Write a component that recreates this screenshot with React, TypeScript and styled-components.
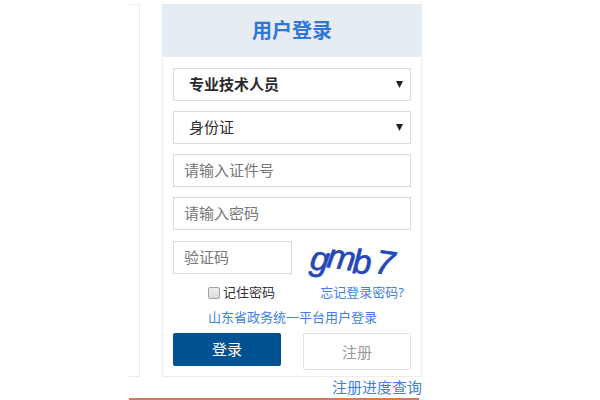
import React from "react";
import styled, { createGlobalStyle } from "styled-components";

const GlobalStyle = createGlobalStyle`
  * { box-sizing: border-box; }
  body {
    margin: 0;
    background: #fff;
    color: #333;
    font-family: "Noto Sans", "Noto Sans CJK SC", sans-serif;
    font-size: 15px;
  }
  button, input, select { font: inherit; margin: 0; }
`;

const Page = styled.main`
  padding: 4px 178px 0 129px;
`;

const Columns = styled.div`
  display: grid;
  grid-template-columns: 11px minmax(0, 1fr);
  column-gap: 22px;
`;

const SidePanel = styled.aside`
  border: 1px solid #ececec;
  border-left: 0;
`;

const Panel = styled.section`
  border: 1px solid #ececec;
`;

const PanelHeader = styled.header`
  margin: -1px -1px 0;
  background: #e5ecf2;
  text-align: center;
`;

const Title = styled.h1`
  margin: 0;
  color: #3075d8;
  font-size: 20px;
  font-weight: 700;
  line-height: 53px;
`;

const Form = styled.form`
  display: flex;
  flex-direction: column;
  padding: 11px 10px 6px;
`;

const Fields = styled.div`
  display: grid;
  gap: 10px;
`;

const SelectBox = styled.div`
  display: grid;
  align-items: center;
`;

const Select = styled.select<{ $strong?: boolean }>`
  grid-area: 1 / 1;
  width: 100%;
  height: 33px;
  padding: 0 24px 2px 15px;
  border: 1px solid #dcdcdc;
  border-radius: 0;
  background: #fff;
  color: #2b2b2b;
  font-weight: ${(p) => (p.$strong ? 700 : 400)};
  appearance: none;
`;

const Arrow = styled.svg`
  grid-area: 1 / 1;
  justify-self: end;
  width: 7px;
  height: 7px;
  margin-right: 8px;
  pointer-events: none;
`;

const Input = styled.input`
  width: 100%;
  min-width: 0;
  height: 33px;
  padding: 0 10px 2px;
  border: 1px solid #dcdcdc;
  border-radius: 0;
  background: #fff;
  color: #333;
  &::placeholder { color: #777; opacity: 1; }
`;

const Split = styled.div`
  display: grid;
  grid-template-columns: 1fr 1fr;
  margin-top: 1px;
`;

const Captcha = styled.svg`
  justify-self: center;
  width: 88px;
  height: 33px;
  overflow: visible;
`;

const Options = styled.div`
  display: flex;
  align-items: center;
  justify-content: space-between;
  padding: 0 7px 0 35px;
  font-size: 13px;
  line-height: 25px;
  margin-top: 6px;
`;

const Remember = styled.label`
  display: flex;
  align-items: center;
  gap: 3px;
  color: #333;
`;

const Checkbox = styled.input`
  appearance: none;
  width: 12px;
  height: 12px;
  border: 1px solid #a2a2a2;
  border-radius: 2px;
  background: linear-gradient(#eee, #dcdcdc);
  &:checked { background: #3075d8; }
`;

const Link = styled.a`
  color: #4080e0;
  text-decoration: none;
`;

const SsoRow = styled.div`
  padding-left: 35px;
  font-size: 13px;
  line-height: 25px;
`;

const Actions = styled.div`
  display: grid;
  grid-template-columns: 1fr 1fr;
  align-items: start;
  column-gap: 22px;
  margin-top: 3px;
`;

const LoginButton = styled.button`
  height: 33px;
  padding: 0 0 2px;
  border: 0;
  border-radius: 2px;
  background: #005293;
  color: #fff;
`;

const RegisterButton = styled.button`
  height: 37px;
  padding: 0;
  border: 1px solid #e2e2e2;
  border-radius: 2px;
  background: #fff;
  color: #999;
`;

const ProgressRow = styled.div`
  text-align: right;
  line-height: 21px;
`;

const BottomRule = styled.hr`
  height: 2px;
  margin: 0 3px 0 0;
  border: 0;
  background: #d57862;
`;

function DropArrow() {
  return (
    <Arrow viewBox="0 0 7 7" aria-hidden="true">
      <path d="M0 0h7L3.5 7z" fill="#222" />
    </Arrow>
  );
}

const captchaGlyphs = [
  { char: "g", x: 1, y: 28, turn: 8 },
  { char: "m", x: 18, y: 26, turn: 8 },
  { char: "b", x: 44, y: 32, turn: 3 },
  { char: "7", x: 66, y: 32, turn: 8 },
];

function CaptchaPicture() {
  return (
    <Captcha viewBox="0 0 88 33" role="img" aria-label="gmb7">
      <g
        fill="#2448b8"
        stroke="#2448b8"
        strokeWidth="0.7"
        fontFamily="Liberation Sans, sans-serif"
        fontStyle="italic"
        fontSize="34"
      >
        {captchaGlyphs.map((g) => (
          <text key={g.char} x={g.x} y={g.y} transform={`rotate(${g.turn} ${g.x} ${g.y})`}>
            {g.char}
          </text>
        ))}
      </g>
    </Captcha>
  );
}

export default function App() {
  return (
    <>
      <GlobalStyle />
      <Page>
        <Columns>
          <SidePanel />
          <Panel>
            <PanelHeader>
              <Title>用户登录</Title>
            </PanelHeader>
            <Form onSubmit={(e) => e.preventDefault()}>
              <Fields>
                <SelectBox>
                  <Select $strong aria-label="用户类型">
                    <option>专业技术人员</option>
                  </Select>
                  <DropArrow />
                </SelectBox>
                <SelectBox>
                  <Select aria-label="证件类型">
                    <option>身份证</option>
                  </Select>
                  <DropArrow />
                </SelectBox>
                <Input type="text" placeholder="请输入证件号" aria-label="证件号" />
                <Input type="password" placeholder="请输入密码" aria-label="密码" />
                <Split>
                  <Input type="text" placeholder="验证码" aria-label="验证码" />
                  <CaptchaPicture />
                </Split>
              </Fields>
              <Options>
                <Remember>
                  <Checkbox type="checkbox" />
                  记住密码
                </Remember>
                <Link href="#forgot">忘记登录密码?</Link>
              </Options>
              <SsoRow>
                <Link href="#sso">山东省政务统一平台用户登录</Link>
              </SsoRow>
              <Actions>
                <LoginButton type="submit">登录</LoginButton>
                <RegisterButton type="button">注册</RegisterButton>
              </Actions>
            </Form>
          </Panel>
        </Columns>
        <ProgressRow>
          <Link href="#progress">注册进度查询</Link>
        </ProgressRow>
        <BottomRule />
      </Page>
    </>
  );
}
